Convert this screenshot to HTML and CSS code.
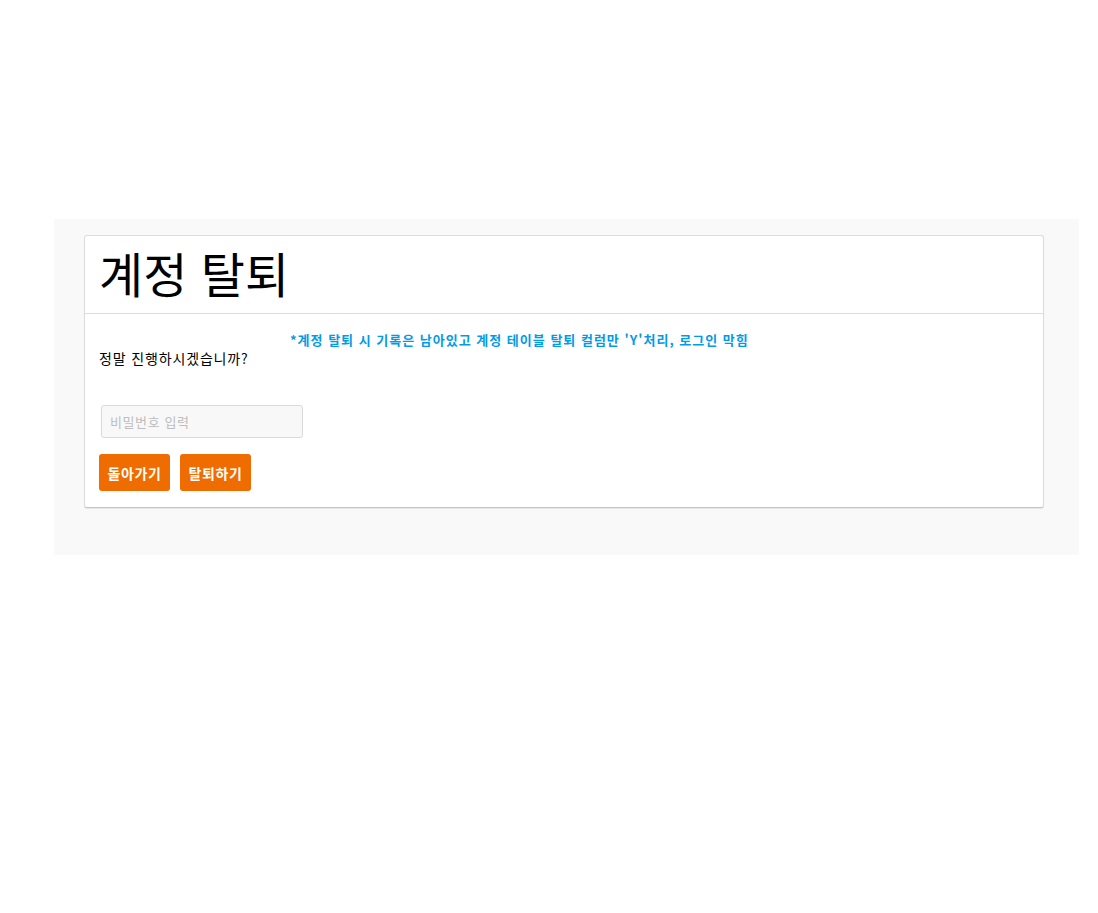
FILE: index.html
```html
<!DOCTYPE html>
<html lang="ko">
<head>
<meta charset="utf-8">
<link rel="stylesheet" href="styles.css">
</head>
<body>
<div class="page">
  <section class="wrap">
    <div class="card">
      <div class="card-head">
        <h1 class="title">계정 탈퇴</h1>
      </div>
      <div class="card-body">
        <div class="row">
          <p class="question">정말 진행하시겠습니까?</p>
          <p class="note">*계정 탈퇴 시 기록은 남아있고 계정 테이블 탈퇴 컬럼만 'Y'처리, 로그인 막힘</p>
        </div>
        <input class="pw" type="password" placeholder="비밀번호 입력">
        <div class="actions">
          <button class="btn" type="button">돌아가기</button>
          <button class="btn" type="button">탈퇴하기</button>
        </div>
      </div>
    </div>
  </section>
</div>
</body>
</html>
```

FILE: styles.css
```css
* { box-sizing: border-box; }
html, body { margin: 0; padding: 0; background: #fff; }
body {
  font-family: "Noto Sans CJK KR", "Noto Sans", sans-serif;
  color: #000;
}
.page {
  padding: 219px 19px 0 54px;
}
.wrap {
  background: #f9f9f9;
  padding: 16px 35px 47px 30px;
}
.card {
  background: #fff;
  border: 1px solid #dcdcdc;
  border-bottom-color: #c4c4c4;
  border-radius: 3px;
  box-shadow: 0 1px 1px rgba(0,0,0,0.08);
}
.card-head {
  border-bottom: 1px solid #dddddd;
  height: 78px;
  padding: 0 14px 6px;
  display: flex;
  align-items: center;
}
.title {
  margin: 0;
  font-size: 48px;
  font-weight: 400;
  line-height: 1;
  letter-spacing: 0;
}
.card-body {
  padding: 14px 14px 16px 14px;
}
.row {
  display: flex;
  align-items: flex-start;
}
.question {
  margin: 0;
  width: 191px;
  padding-top: 20px;
  font-size: 14px;
  line-height: 20px;
  letter-spacing: 0.85px;
}
.note {
  margin: 0;
  padding-top: 2px;
  font-size: 13px;
  line-height: 20px;
  font-weight: 700;
  letter-spacing: 1px;
  color: #039be5;
}
.pw {
  display: block;
  margin: 37px 0 0 2px;
  width: 202px;
  height: 33px;
  border: 1px solid #dadada;
  border-radius: 3px;
  background: #f8f8f8;
  padding: 0 8px;
  font-family: inherit;
  font-size: 13px;
  letter-spacing: 0.6px;
  color: #333;
  outline: none;
}
.pw::placeholder { color: #bdbdbd; }
.actions {
  display: flex;
  gap: 10px;
  margin-top: 16px;
}
.btn {
  height: 37px;
  width: 71px;
  padding: 0;
  border: 0;
  border-radius: 3px;
  background: #ef6c00;
  color: #fff;
  font-family: inherit;
  font-size: 14px;
  font-weight: 700;
  letter-spacing: 0.6px;
  cursor: pointer;
}
```
